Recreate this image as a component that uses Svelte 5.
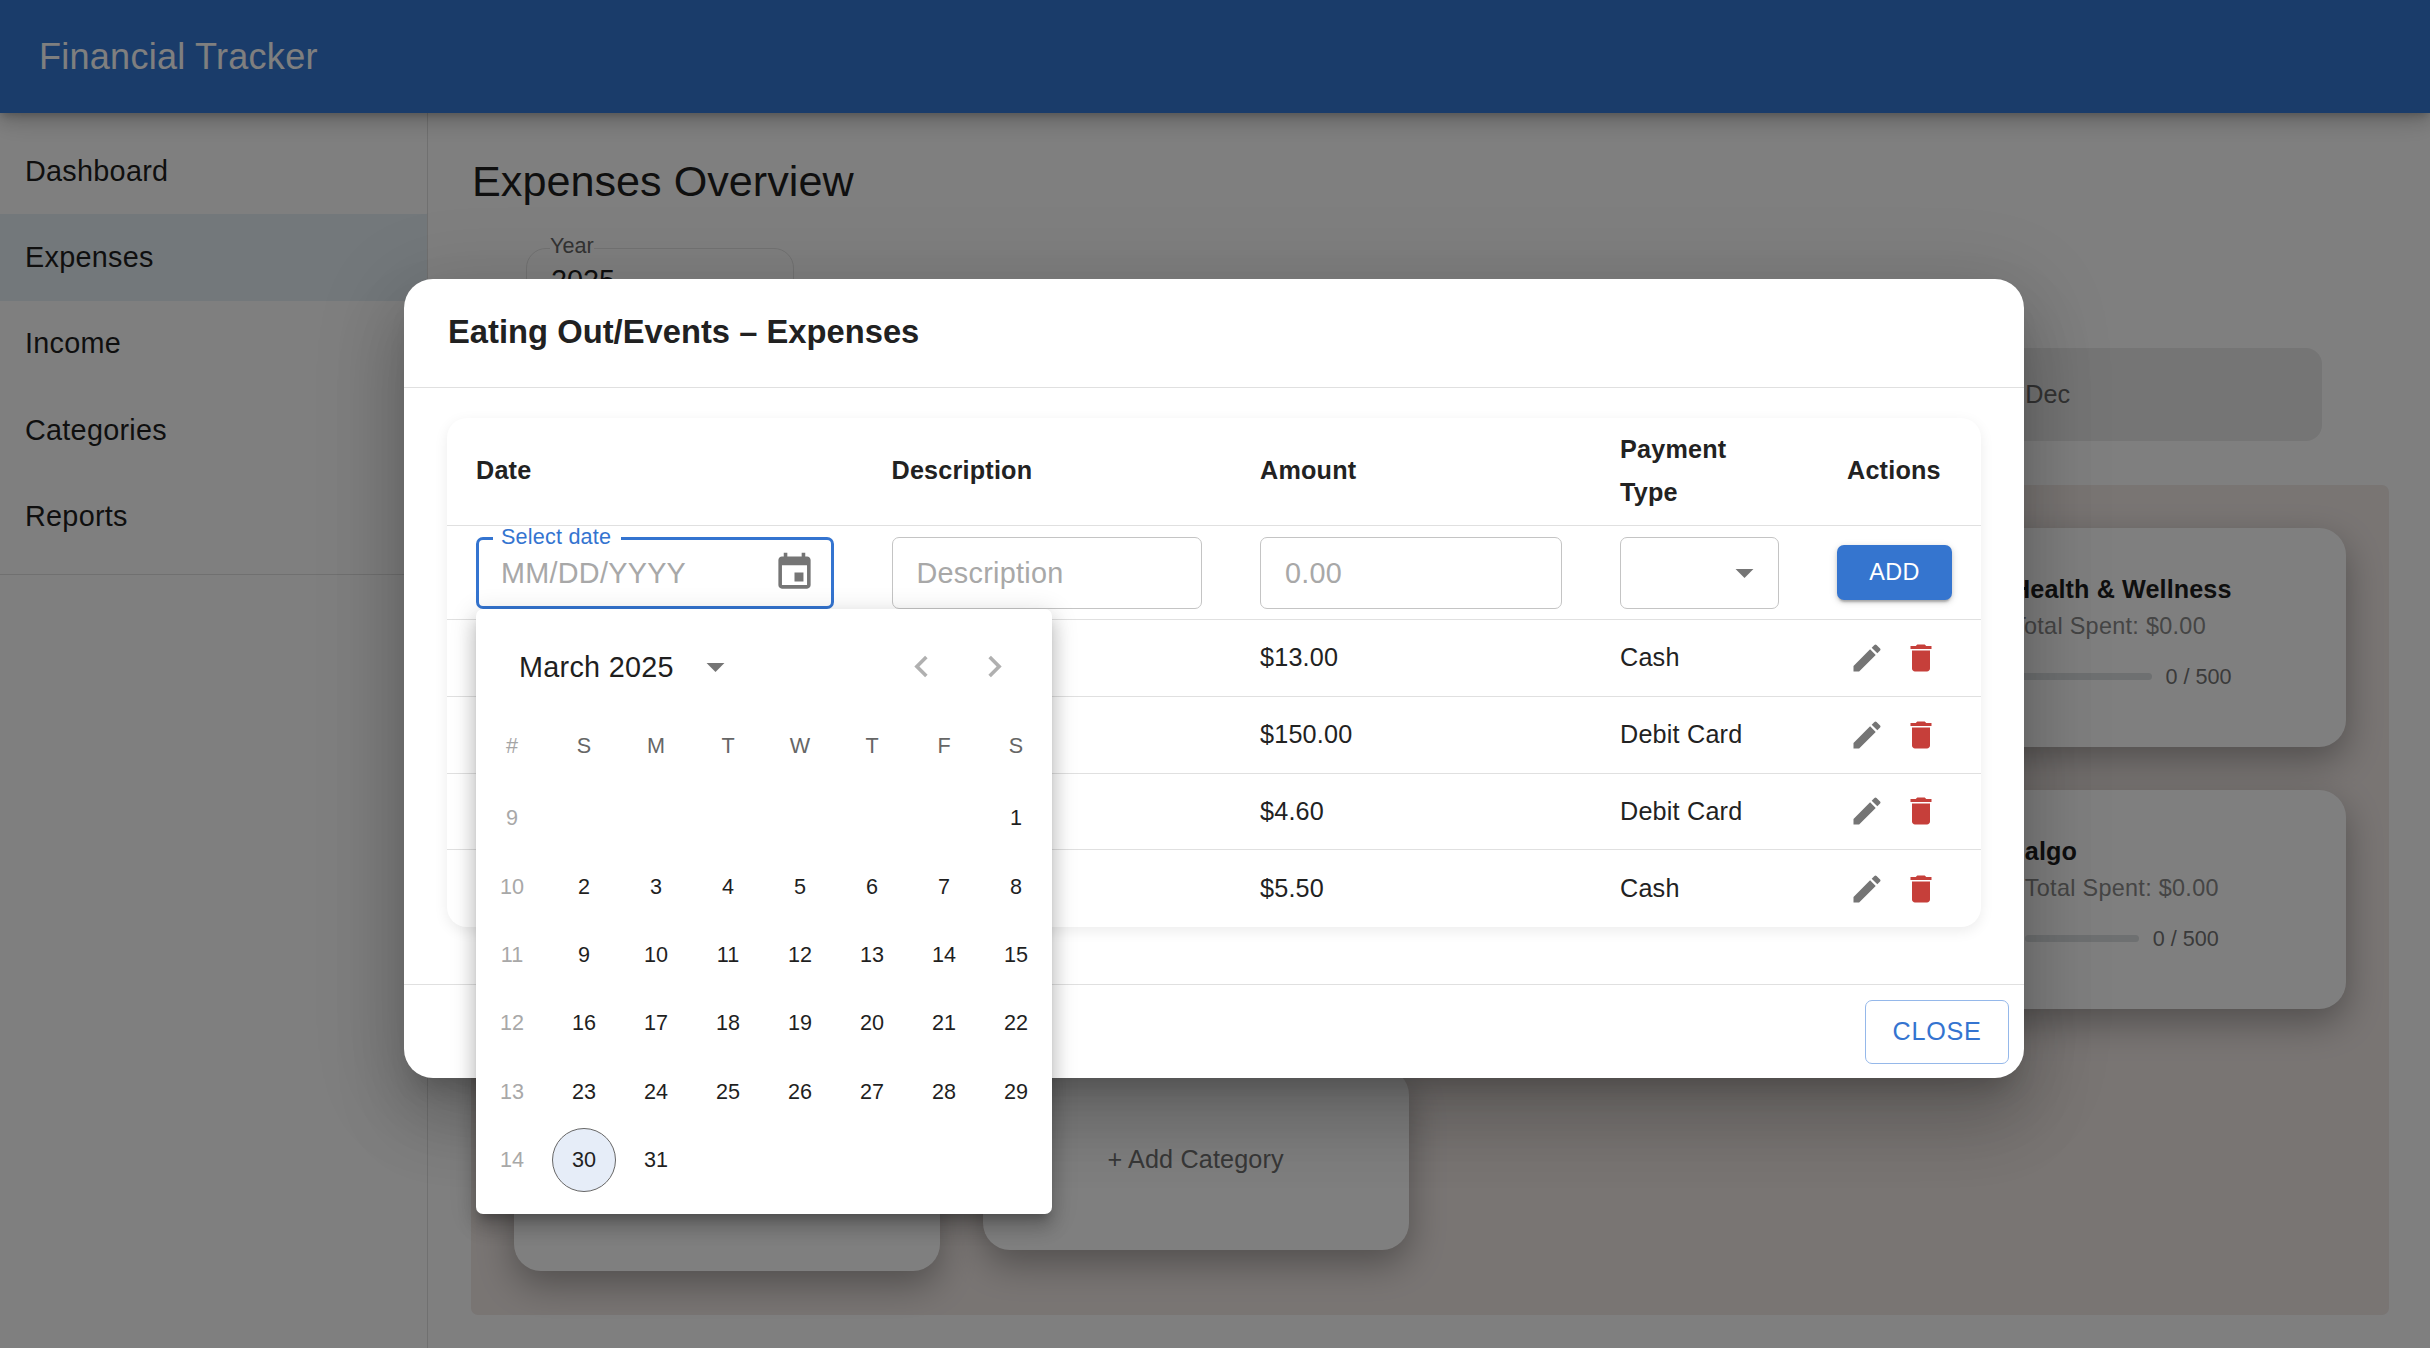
<script>
  const nav = ['Dashboard', 'Expenses', 'Income', 'Categories', 'Reports'];
  const rows = [
    { amount: '$13.00', type: 'Cash' },
    { amount: '$150.00', type: 'Debit Card' },
    { amount: '$4.60', type: 'Debit Card' },
    { amount: '$5.50', type: 'Cash' }
  ];
  const dow = ['#', 'S', 'M', 'T', 'W', 'T', 'F', 'S'];
  const weeks = [
    [9, '', '', '', '', '', '', 1],
    [10, 2, 3, 4, 5, 6, 7, 8],
    [11, 9, 10, 11, 12, 13, 14, 15],
    [12, 16, 17, 18, 19, 20, 21, 22],
    [13, 23, 24, 25, 26, 27, 28, 29],
    [14, 30, 31, '', '', '', '', '']
  ];
  const edit = 'M3 17.25V21h3.75L17.81 9.94l-3.75-3.75L3 17.25zM20.71 7.04c.39-.39.39-1.02 0-1.41l-2.34-2.34a.9959.9959 0 0 0-1.41 0l-1.83 1.83 3.75 3.75 1.83-1.83z';
  const del = 'M6 19c0 1.1.9 2 2 2h8c1.1 0 2-.9 2-2V7H6v12zM19 4h-3.5l-1-1h-5l-1 1H5v2h14V4z';
</script>

<div class="page">
  <header class="appbar"><span class="brand">Financial Tracker</span></header>
  <div class="body">
    <nav class="side">
      <ul class="navlist">
        {#each nav as item}
          <li class:active={item === 'Expenses'}>{item}</li>
        {/each}
      </ul>
    </nav>
    <main class="main">
      <h1 class="title">Expenses Overview</h1>
      <div class="year"><span class="year-label">Year</span><span class="year-value">2025</span></div>
      <div class="months"><span class="dec">Dec</span></div>
      <section class="panel">
        <div class="card"></div>
        <div class="card"></div>
        <div class="card"></div>
        <div class="card">
          <div class="block">
            <div class="c-title">Health &amp; Wellness</div>
            <div class="c-spent">Total Spent: $0.00</div>
            <div class="c-prog"><span class="bar"></span><span class="c-num">0 / 500</span></div>
          </div>
        </div>
        <div class="card"></div>
        <div class="card"></div>
        <div class="card"></div>
        <div class="card">
          <div class="block">
            <div class="c-title">algo</div>
            <div class="c-spent">Total Spent: $0.00</div>
            <div class="c-prog"><span class="bar"></span><span class="c-num">0 / 500</span></div>
          </div>
        </div>
        <div class="card"></div>
        <div class="card add">+ Add Category</div>
      </section>
    </main>
  </div>

  <div class="backdrop"></div>

  <div class="modal">
    <div class="m-title">Eating Out/Events – Expenses</div>
    <div class="m-content">
      <div class="table">
        <div class="tr head">
          <div class="th">Date</div>
          <div class="th">Description</div>
          <div class="th">Amount</div>
          <div class="th">Payment<br />Type</div>
          <div class="th">Actions</div>
        </div>
        <div class="tr form">
          <div class="td">
            <div class="field focus">
              <span class="legend">Select date</span>
              <span class="ph">MM/DD/YYYY</span>
              <svg class="cal" viewBox="0 0 24 24"><path d="M17 12h-5v5h5v-5zM16 1v2H8V1H6v2H5c-1.11 0-1.99.9-1.99 2L3 19c0 1.1.89 2 2 2h14c1.1 0 2-.9 2-2V5c0-1.1-.9-2-2-2h-1V1h-2zm3 18H5V8h14v11z" /></svg>
            </div>
          </div>
          <div class="td"><div class="field f-desc"><span class="ph">Description</span></div></div>
          <div class="td"><div class="field f-amt"><span class="ph">0.00</span></div></div>
          <div class="td">
            <div class="field f-sel">
              <svg class="caret" viewBox="0 0 24 24"><path d="M7 10l5 5 5-5z" /></svg>
            </div>
          </div>
          <div class="td act"><button class="add-btn">ADD</button></div>
        </div>
        {#each rows as r}
          <div class="tr data">
            <div class="td"></div>
            <div class="td"></div>
            <div class="td">{r.amount}</div>
            <div class="td">{r.type}</div>
            <div class="td icons">
              <svg class="ico grey" viewBox="0 0 24 24"><path d={edit} /></svg>
              <svg class="ico red" viewBox="0 0 24 24"><path d={del} /></svg>
            </div>
          </div>
        {/each}
      </div>
    </div>
    <div class="m-foot"><button class="close">CLOSE</button></div>

    <div class="popup">
      <div class="cal-head">
        <span class="month">March 2025</span>
        <svg class="drop" viewBox="0 0 24 24"><path d="M7 10l5 5 5-5z" /></svg>
        <span class="spacer"></span>
        <svg class="chev" viewBox="0 0 24 24"><path d="M15.41 16.59L10.83 12l4.58-4.59L14 6l-6 6 6 6 1.41-1.41z" /></svg>
        <svg class="chev" viewBox="0 0 24 24"><path d="M8.59 16.59L13.17 12 8.59 7.41 10 6l6 6-6 6-1.41-1.41z" /></svg>
      </div>
      <div class="dow">
        {#each dow as d, i}
          <span class:hash={i === 0}>{d}</span>
        {/each}
      </div>
      {#each weeks as w}
        <div class="week">
          {#each w as d, i}
            <span class="day" class:wk={i === 0} class:today={d === 30 && i === 1}>{d}</span>
          {/each}
        </div>
      {/each}
    </div>
  </div>
</div>

<style>
  :global(body) {
    margin: 0;
    background: #fff;
  }
  .page {
    position: relative;
    width: 2430px;
    height: 1348px;
    overflow: hidden;
    font-family: "Liberation Sans", Arial, sans-serif;
    color: #1f1f1f;
    background: #fff;
  }
  .appbar {
    position: relative;
    z-index: 1;
    height: 113px;
    padding-left: 39px;
    display: flex;
    align-items: center;
    background: #3578d4;
    box-shadow: 0 4px 8px -2px rgba(0, 0, 0, 0.2), 0 7px 18px 1px rgba(0, 0, 0, 0.14), 0 2px 32px 2px rgba(0, 0, 0, 0.12);
  }
  .brand {
    font-size: 36px;
    letter-spacing: 0.27px;
    color: #fff;
  }
  .body {
    display: flex;
    height: 1235px;
  }
  .side {
    width: 427px;
    flex: none;
    border-right: 1px solid #e0e0e0;
  }
  .navlist {
    list-style: none;
    margin: 0;
    padding: 15px 0 14px;
    border-bottom: 1.5px solid #e0e0e0;
  }
  .navlist li {
    height: 86.4px;
    display: flex;
    align-items: center;
    padding-left: 25px;
    font-size: 28.8px;
    letter-spacing: 0.27px;
  }
  .navlist li.active {
    background: #e6f0f6;
  }
  .main {
    flex: 1;
    min-width: 0;
    padding: 41px 41px 0 43px;
  }
  .title {
    margin: 0;
    height: 54px;
    line-height: 54px;
    padding-left: 1px;
    font-size: 43.2px;
    font-weight: 400;
  }
  .year {
    position: relative;
    margin: 40px 0 0 55px;
    width: 268px;
    height: 72px;
    box-sizing: border-box;
    border: 1.5px solid #e4e4e4;
    border-radius: 20px;
    padding: 9px 0 0 24px;
  }
  .year-label {
    position: absolute;
    left: 23px;
    top: -16px;
    font-size: 21.6px;
    line-height: 26px;
    background: #fff;
    color: #666;
  }
  .year-value {
    font-size: 28.8px;
    line-height: 44px;
  }
  .months {
    margin: 28px 67px 0 1px;
    height: 93px;
    box-sizing: border-box;
    background: #ebebeb;
    border-radius: 16px;
    display: flex;
    align-items: center;
    justify-content: flex-end;
    padding-right: 252px;
  }
  .dec {
    font-size: 25.2px;
    color: #666;
  }
  .panel {
    margin-top: 44px;
    height: 830px;
    box-sizing: border-box;
    padding: 43px;
    background: #f2eae7;
    border-radius: 7px;
    display: grid;
    grid-template-columns: repeat(4, 426px);
    grid-auto-rows: 219px;
    gap: 43px 42.6px;
  }
  .card {
    background: #fff;
    border-radius: 27px;
    box-shadow: 0 14px 36px rgba(0, 0, 0, 0.32);
    display: flex;
    align-items: center;
    justify-content: center;
    padding-right: 22px;
  }
  .add {
    align-self: start;
    margin-top: 16px;
    height: 182px;
    padding-right: 0;
    font-size: 25.2px;
    letter-spacing: 0.15px;
    color: #707070;
  }
  .block {
    display: flex;
    flex-direction: column;
  }
  .c-title {
    font-size: 25.2px;
    font-weight: 700;
    line-height: 36px;
    letter-spacing: 0.1px;
    margin-top: -10px;
  }
  .c-spent {
    font-size: 23.4px;
    line-height: 36px;
    letter-spacing: 0.3px;
    margin-top: 1px;
    color: #8a8a8a;
    white-space: nowrap;
  }
  .c-prog {
    display: flex;
    align-items: center;
    gap: 14px;
    margin-top: 15px;
    height: 36px;
  }
  .bar {
    flex: 1;
    height: 7px;
    border-radius: 4px;
    background: #dce0e2;
  }
  .c-num {
    font-size: 21.6px;
    color: #757575;
    white-space: nowrap;
  }
  .backdrop {
    position: absolute;
    inset: 0;
    z-index: 2;
    background: rgba(0, 0, 0, 0.5);
  }
  .modal {
    position: absolute;
    z-index: 3;
    left: 404px;
    top: 279px;
    width: 1620px;
    height: 799px;
    background: #fff;
    border-radius: 29px;
    box-shadow: 0 20px 27px -13px rgba(0, 0, 0, 0.2), 0 43px 68px 5px rgba(0, 0, 0, 0.14), 0 16px 83px 14px rgba(0, 0, 0, 0.12);
    display: flex;
    flex-direction: column;
  }
  .m-title {
    height: 109px;
    flex: none;
    box-sizing: border-box;
    padding: 0 0 2px 44px;
    display: flex;
    align-items: center;
    font-size: 32.7px;
    font-weight: 700;
    letter-spacing: 0.03px;
    color: #212121;
    border-bottom: 1.6px solid #e0e0e0;
  }
  .m-content {
    height: 597px;
    flex: none;
    box-sizing: border-box;
    padding: 30px 43px 0;
    border-bottom: 1.6px solid #e0e0e0;
  }
  .table {
    border-radius: 20px;
    box-shadow: 0 4px 14px rgba(0, 0, 0, 0.08);
    font-size: 25.2px;
    letter-spacing: 0.2px;
    color: #222;
  }
  .tr {
    display: grid;
    grid-template-columns: 415.5px 368.5px 360px 227px 163px;
    border-bottom: 1.6px solid #e0e0e0;
    box-sizing: border-box;
  }
  .head {
    height: 108px;
    align-items: center;
    font-weight: 700;
    line-height: 43.2px;
    padding-bottom: 1px;
  }
  .form {
    height: 94px;
    padding-top: 11px;
  }
  .data {
    height: 76.8px;
    align-items: center;
  }
  .data:last-child {
    height: 77px;
    border-bottom: 0;
  }
  .th,
  .td {
    padding-left: 29px;
  }
  .field {
    position: relative;
    box-sizing: border-box;
    height: 72px;
    border: 1.5px solid #c4c4c4;
    border-radius: 7px;
    display: flex;
    align-items: center;
    padding-left: 24px;
  }
  .field.focus {
    width: 358px;
    border: 3.6px solid #3474d0;
    padding-left: 22px;
  }
  .legend {
    position: absolute;
    left: 14px;
    top: -14px;
    padding: 0 10px 0 8px;
    background: #fff;
    font-size: 21.6px;
    line-height: 22px;
    color: #3474d0;
    letter-spacing: 0.2px;
  }
  .ph {
    font-size: 28.8px;
    color: #a8a8a8;
    letter-spacing: 0.27px;
  }
  .cal {
    position: absolute;
    right: 15px;
    top: 11px;
    width: 43px;
    height: 43px;
    fill: #757575;
  }
  .f-desc {
    width: 310.5px;
  }
  .f-amt {
    width: 302px;
  }
  .f-sel {
    width: 159px;
  }
  .caret {
    position: absolute;
    right: 12px;
    top: 13px;
    width: 43px;
    height: 43px;
    fill: #757575;
  }
  .act {
    padding-left: 19px;
    padding-top: 8px;
  }
  .add-btn {
    width: 115px;
    height: 55px;
    border: 0;
    border-radius: 7px;
    padding: 0;
    background: #3575cf;
    color: #fff;
    font-family: inherit;
    font-size: 23.4px;
    letter-spacing: 0.4px;
    box-shadow: 0 4px 2px -2px rgba(0, 0, 0, 0.2), 0 2px 4px rgba(0, 0, 0, 0.14), 0 2px 9px rgba(0, 0, 0, 0.12);
  }
  .icons {
    display: flex;
    align-items: center;
    gap: 18px;
    padding-left: 31px;
  }
  .ico {
    width: 36px;
    height: 36px;
    flex: none;
  }
  .grey {
    fill: #757575;
  }
  .red {
    fill: #c63f3a;
  }
  .m-foot {
    flex: 1;
    display: flex;
    justify-content: flex-end;
    align-items: flex-start;
    padding: 15px 15px 0 0;
  }
  .close {
    width: 144px;
    height: 64px;
    padding: 0 0 2px;
    background: #fff;
    border: 1.6px solid #95b8ea;
    border-radius: 7px;
    color: #3474d0;
    font-family: inherit;
    font-size: 25.2px;
    letter-spacing: 0.72px;
  }
  .popup {
    position: absolute;
    left: 72px;
    top: 330px;
    width: 576px;
    height: 605px;
    background: #fff;
    border-radius: 7px;
    box-shadow: 0 9px 9px -5px rgba(0, 0, 0, 0.2), 0 14px 18px 2px rgba(0, 0, 0, 0.14), 0 5px 25px 4px rgba(0, 0, 0, 0.12);
  }
  .cal-head {
    height: 103px;
    display: flex;
    align-items: center;
    padding: 12px 36px 0 43px;
    box-sizing: border-box;
  }
  .month {
    font-size: 28.8px;
    letter-spacing: 0.27px;
    padding-top: 1px;
  }
  .drop {
    width: 43px;
    height: 43px;
    margin-left: 20px;
    fill: #757575;
  }
  .spacer {
    flex: 1;
  }
  .chev {
    width: 43px;
    height: 43px;
    margin-left: 30px;
    fill: #b0b0b0;
  }
  .dow,
  .week {
    display: grid;
    grid-template-columns: repeat(8, 72px);
    justify-items: center;
    align-items: center;
    font-size: 21.6px;
  }
  .dow {
    height: 68px;
    color: #666;
    margin-bottom: 4px;
  }
  .hash {
    color: #a5a5a5;
  }
  .week {
    height: 68.4px;
  }
  .day {
    width: 64px;
    height: 64px;
    box-sizing: border-box;
    display: flex;
    align-items: center;
    justify-content: center;
  }
  .wk {
    color: #a8a8a8;
  }
  .today {
    border: 1px solid #666;
    border-radius: 50%;
    background: #e6edf8;
  }
</style>
